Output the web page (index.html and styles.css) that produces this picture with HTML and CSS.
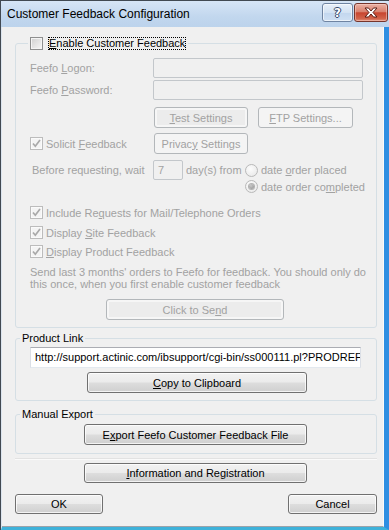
FILE: index.html
```html
<!DOCTYPE html>
<html>
<head>
<meta charset="utf-8">
<title>Customer Feedback Configuration</title>
<link rel="stylesheet" href="styles.css">
</head>
<body>
<div class="window">
  <div class="titlebar">
    <span class="title">Customer Feedback Configuration</span>
    <div class="caption-btns">
      <span class="cbtn help">?</span>
      <span class="cbtn close"><svg width="14" height="11" viewBox="0 0 14 11"><path d="M1 1 H4.5 L7 4 L9.5 1 H13 L9 5.5 L13 10 H9.5 L7 7 L4.5 10 H1 L5 5.5 Z" fill="#fff" stroke="#5b1d15" stroke-width="1"/></svg></span>
    </div>
  </div>
  <div class="frame">
    <div class="client">
      <fieldset class="group g-feedback">
        <legend class="legend-check"><span class="chk"></span><span class="focus"><u>E</u>nable Customer Feedback</span></legend>
        <div class="row r-logon"><span class="lbl dis-text">Feefo <u>L</u>ogon:</span><span class="input dis"></span></div>
        <div class="row r-pass"><span class="lbl dis-text">Feefo <u>P</u>assword:</span><span class="input dis"></span></div>
        <div class="row r-tests"><span class="btn dis inner b-test"><span><u>T</u>est Settings</span></span><span class="btn dis b-ftp"><span><u>F</u>TP Settings...</span></span></div>
        <div class="row r-solicit">
          <span class="lbl check dis-text"><span class="chk checked"><svg width="11" height="11" viewBox="0 0 11 11"><path d="M2 5.5 L4.3 8.2 L9 2" fill="none" stroke="#a9a9a9" stroke-width="1.7"/></svg></span><span class="txt">Solicit <u>F</u>eedback</span></span>
          <span class="btn dis b-privacy"><span>Privac<u>y</u> Settings</span></span>
        </div>
        <div class="row r-wait">
          <span class="lbl wait dis-text">Before requesting, wait</span>
          <span class="input dis small dis-text">7</span>
          <span class="days dis-text">day(s) from</span>
          <span class="radio"></span><span class="txt dis-text">date <u>o</u>rder placed</span>
        </div>
        <div class="row r-wait2"><span class="radio on"></span><span class="txt dis-text">date order co<u>m</u>pleted</span></div>
        <div class="row r-chk r-chk1"><span class="chk checked"><svg width="11" height="11" viewBox="0 0 11 11"><path d="M2 5.5 L4.3 8.2 L9 2" fill="none" stroke="#a9a9a9" stroke-width="1.7"/></svg></span><span class="txt dis-text">Include Re<u>q</u>uests for Mail/Telephone Orders</span></div>
        <div class="row r-chk r-chk2"><span class="chk checked"><svg width="11" height="11" viewBox="0 0 11 11"><path d="M2 5.5 L4.3 8.2 L9 2" fill="none" stroke="#a9a9a9" stroke-width="1.7"/></svg></span><span class="txt dis-text">Display <u>S</u>ite Feedback</span></div>
        <div class="row r-chk r-chk3"><span class="chk checked"><svg width="11" height="11" viewBox="0 0 11 11"><path d="M2 5.5 L4.3 8.2 L9 2" fill="none" stroke="#a9a9a9" stroke-width="1.7"/></svg></span><span class="txt dis-text"><u>D</u>isplay Product Feedback</span></div>
        <p class="note dis-text">Send last 3 months' orders to Feefo for feedback. You should only do<br>this once, when you first enable customer feedback</p>
        <div class="row r-send"><span class="btn dis inner b-send"><span>Click to Se<u>n</u>d</span></span></div>
      </fieldset>

      <fieldset class="group g-link">
        <legend class="legend-text">Product Link</legend>
        <div class="url">http://support.actinic.com/ibsupport/cgi-bin/ss000111.pl?PRODREF</div>
        <div class="row r-copy"><span class="btn b-copy"><span><u>C</u>opy to Clipboard</span></span></div>
      </fieldset>

      <fieldset class="group g-export">
        <legend class="legend-text">Manual Export</legend>
        <div class="row"><span class="btn b-export"><span>E<u>x</u>port Feefo Customer Feedback File</span></span></div>
      </fieldset>

      <div class="separator"></div>
      <div class="row r-info"><span class="btn b-info"><span><u>I</u>nformation and Registration</span></span></div>
      <div class="row r-dialog">
        <span class="btn b-ok">OK</span>
        <span class="btn b-cancel">Cancel</span>
      </div>
    </div>
  </div>
</div>
</body>
</html>
```
FILE: styles.css
```css
* { box-sizing: border-box; }
html, body { margin: 0; padding: 0; }
body {
  width: 389px;
  height: 530px;
  overflow: hidden;
  font-family: "Liberation Sans", Arial, sans-serif;
  font-size: 11px;
  color: #000;
  background: #f0f0f0;
}
u { text-decoration: underline; }

.window {
  height: 530px;
  display: flex;
  flex-direction: column;
  border-left: 1px solid #414952;
}

/* Title bar */
.titlebar {
  height: 27px;
  flex: none;
  display: flex;
  justify-content: space-between;
  align-items: flex-start;
  border-top: 1px solid #414952;
  background: linear-gradient(#d6e5f6, #c2d7ee 60%, #bcd3ec);
  padding-left: 6px;
}
.title {
  font-size: 12px;
  line-height: 26px;
  color: #000;
  white-space: nowrap;
}
.caption-btns {
  display: flex;
  gap: 1px;
  margin-top: 2px;
  margin-right: 1px;
}
.cbtn {
  height: 19px;
  border-radius: 3px;
  display: flex;
  align-items: center;
  justify-content: center;
}
.help {
  width: 31px;
  border: 1px solid #6f84a2;
  background: linear-gradient(#e8f0fa, #d3e2f3 50%, #c2d6ee 51%, #cfe0f3);
  box-shadow: inset 0 0 0 1px rgba(255,255,255,0.6);
  font-family: "DejaVu Sans", sans-serif;
  font-weight: bold;
  font-size: 12px;
  color: #fff;
  text-shadow: 1px 0 0 #34496b, -1px 0 0 #34496b, 0 1px 0 #34496b, 0 -1px 0 #34496b;
}
.close {
  width: 34px;
  border: 1px solid #76352c;
  background: linear-gradient(#eab0a4, #d9826f 45%, #c8452f 52%, #d1634a 85%, #e0907a);
  box-shadow: inset 0 0 0 1px rgba(255,220,210,0.45);
}

/* Frame / client */
.frame {
  flex: 1;
  display: flex;
  border-left: 1px solid #dbe4ee;
  border-right: 5px solid #2f8fe2;
  border-bottom: 3px solid #3fb2da;
}
.client {
  flex: 1;
  display: flex;
  flex-direction: column;
  background: #f0f0f0;
  border-right: 1px solid #fbfbfb;
  border-bottom: 1px solid #9ca3aa;
  padding: 10px 6px 0 13px;
}

/* Group boxes */
.group {
  margin: 0;
  min-width: 0;
  width: 362px;
  border: 1px solid #d5dfe5;
  border-radius: 3px;
}
.g-feedback { padding: 8px 13px 7px 14px; }
.g-link { margin-top: 4px; padding: 2px 6px 7px 14px; }
.g-export { margin-top: 7px; padding: 3px 6px 8px 14px; }

.group legend {
  height: 13px;
  line-height: 13px;
  padding: 0 2px;
  white-space: nowrap;
}
.legend-check { margin-left: -2px; display: flex; align-items: center; }
.legend-text { margin-left: -10px; }

.focus {
  outline: 1px dotted #000;
  outline-offset: -1px;
  padding: 0 1px 0 1px;
  margin-left: 2px;
  line-height: 13px;
  height: 13px;
  color: #000;
}

.dis-text { color: #a2a2a2; }
.txt { white-space: nowrap; }

.row { display: flex; align-items: center; }
.lbl { width: 123px; flex: none; white-space: nowrap; }
.r-logon { height: 20px; }
.r-pass { height: 20px; margin-top: 2px; }
.r-tests { height: 21px; margin-top: 7px; padding-left: 124px; gap: 10px; }
.r-solicit { height: 21px; margin-top: 5px; }
.r-wait { height: 20px; margin-top: 6px; }
.r-wait2 { height: 13px; padding-left: 215px; }
.r-chk { height: 13px; }
.r-chk1 { margin-top: 13px; }
.r-chk2 { margin-top: 7px; }
.r-chk3 { margin-top: 6px; }
.r-send { margin-top: 9px; }

.check { display: flex; align-items: center; }
.wait { padding-left: 2px; }
.days { width: 62px; flex: none; padding-left: 3px; white-space: nowrap; }

/* Inputs */
.input {
  display: flex;
  align-items: center;
  height: 20px;
  width: 210px;
  border: 1px solid #c3c7cb;
  border-radius: 2px;
  background: #f0f0f0;
}
.input.small { width: 30px; padding-left: 4px; }

.url {
  width: 331px;
  height: 21px;
  border: 1px solid #abadb3;
  border-left-color: #dbdfe6;
  border-right-color: #dbdfe6;
  border-bottom-color: #e3e9ef;
  background: #fff;
  padding-left: 4px;
  line-height: 19px;
  white-space: nowrap;
  overflow: hidden;
}

/* Check boxes and radios */
.chk {
  flex: none;
  width: 13px;
  height: 13px;
  margin-right: 3px;
  border: 1px solid #8e8f8f;
  background: linear-gradient(135deg, #d0d0d0, #f7f7f7);
  box-shadow: inset 0 0 0 1px #f4f4f4;
  display: inline-flex;
  align-items: center;
  justify-content: center;
}
.chk.checked {
  border-color: #bcbcbc;
  background: #f4f4f4;
  box-shadow: inset 0 0 0 1px #fafafa;
}
.radio {
  flex: none;
  width: 13px;
  height: 13px;
  margin-right: 3px;
  border: 1px solid #b9b9b9;
  border-radius: 50%;
  background: radial-gradient(circle at 40% 35%, #fcfcfc, #e6e6e6);
  display: inline-flex;
  align-items: center;
  justify-content: center;
}
.radio.on::after {
  content: "";
  width: 5px;
  height: 5px;
  border-radius: 50%;
  background: radial-gradient(circle at 40% 35%, #c9c9c9, #8d8d8d);
  box-shadow: 0 0 0 1px #b3b3b3;
}

/* Paragraph */
.note {
  margin: 8px 0 0;
  line-height: 12px;
  white-space: nowrap;
}

/* Buttons */
.btn {
  flex: none;
  display: inline-flex;
  align-items: center;
  justify-content: center;
  height: 21px;
  border: 1px solid #707070;
  border-radius: 3px;
  background: linear-gradient(#f2f2f2 0%, #ebebeb 48%, #dddddd 52%, #cfcfcf 100%);
  box-shadow: inset 0 0 0 1px rgba(255,255,255,0.75);
  color: #000;
  white-space: nowrap;
}
.btn.dis {
  border-color: #b3b7ba;
  background: #f4f4f4;
  box-shadow: none;
  color: #a2a2a2;
}
.btn.dis.inner {
  background: #ececec;
  box-shadow: inset 0 0 0 2px #f6f6f6;
}
.b-test { width: 94px; }
.b-ftp { width: 95px; }
.b-privacy { width: 94px; margin-left: 1px; }
.b-send { width: 178px; margin-left: 76px; }
.b-copy { width: 220px; margin-left: 57px; }
.r-copy { margin-top: 4px; }
.b-export { width: 223px; margin-left: 54px; }

.separator {
  margin-top: 4px;
  height: 2px;
  border-top: 1px solid #e2e2e2;
  border-bottom: 1px solid #fafafa;
}
.r-info { margin-top: 3px; }
.b-info { width: 223px; height: 20px; margin-left: 69px; }
.r-dialog { margin-top: 11px; justify-content: space-between; }
.b-ok { width: 88px; height: 20px; }
.b-cancel { width: 89px; height: 20px; }
```
